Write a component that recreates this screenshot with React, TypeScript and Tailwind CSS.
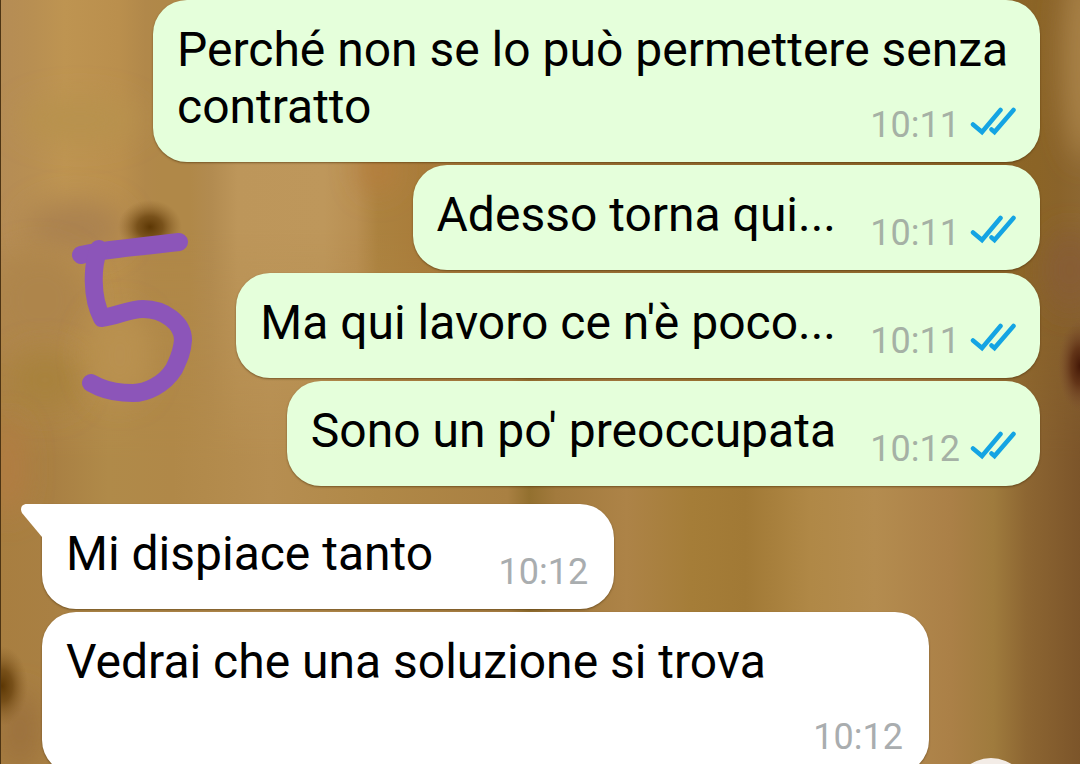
import React from "react";

interface Message {
  id: number;
  text: string;
  time: string;
  sent: boolean;
  tail?: boolean;
}

const MESSAGES: Message[] = [
  { id: 1, text: "Perché non se lo può permettere senza contratto", time: "10:11", sent: true },
  { id: 2, text: "Adesso torna qui...", time: "10:11", sent: true },
  { id: 3, text: "Ma qui lavoro ce n'è poco...", time: "10:11", sent: true },
  { id: 4, text: "Sono un po' preoccupata", time: "10:12", sent: true },
  { id: 5, text: "Mi dispiace tanto", time: "10:12", sent: false, tail: true },
  { id: 6, text: "Vedrai che una soluzione si trova", time: "10:12", sent: false },
];

// wood grain, left to right: [offset, color]
const GRAIN_TOP = [
  [0, "#b58c55"], [0.03, "#b88f52"], [0.06, "#be9451"], [0.11, "#ba8f4d"], [0.135, "#b1884a"],
  [0.15, "#b08848"], [0.175, "#b08848"], [0.195, "#b28b50"], [0.22, "#bd965a"], [0.3, "#be975b"],
  [0.33, "#b98f52"], [0.35, "#ac823f"], [0.39, "#a97c3a"], [0.6, "#9a7032"], [0.96, "#8b6426"],
  [0.98, "#8a632a"], [1, "#8d6731"],
] as const;

const GRAIN_BOTTOM = [
  [0, "#a87e40"], [0.05, "#a98043"], [0.1, "#b08a49"], [0.16, "#b08848"], [0.25, "#b68e51"],
  [0.35, "#b08847"], [0.47, "#a98042"], [0.49, "#93702f"], [0.515, "#a27a3d"], [0.58, "#ad8347"],
  [0.64, "#a57d38"], [0.69, "#a17935"], [0.75, "#b08846"], [0.81, "#b48c4f"], [0.88, "#ab8047"],
  [0.92, "#9f7b3d"], [0.95, "#8d6632"], [1, "#7c552a"],
] as const;

// soft colour patches over the grain
const PATCHES = [
  { cx: 75, cy: 228, rx: 50, ry: 28, fill: "#ab8250" },
  { cx: 40, cy: 300, rx: 50, ry: 50, fill: "#ae854b" },
  { cx: 45, cy: 380, rx: 35, ry: 30, fill: "#a8823e" },
  { cx: 120, cy: 355, rx: 32, ry: 45, fill: "#b99150" },
  { cx: 80, cy: 120, rx: 60, ry: 22, fill: "#b8924d" },
  { cx: 378, cy: 170, rx: 18, ry: 22, fill: "#b67e3c" },
  { cx: 8, cy: 468, rx: 16, ry: 48, fill: "#b27d43" },
  { cx: 1085, cy: 60, rx: 22, ry: 100, fill: "#a98246" },
  { cx: 1070, cy: 270, rx: 25, ry: 40, fill: "#875d35" },
  { cx: 20, cy: 730, rx: 20, ry: 40, fill: "#9b713d" },
];

function Wallpaper() {
  return (
    <svg
      className="absolute inset-0 h-full w-full"
      viewBox="0 0 1080 764"
      preserveAspectRatio="none"
      aria-hidden="true"
    >
      <defs>
        <linearGradient id="grainTop">
          {GRAIN_TOP.map(([offset, color]) => (
            <stop key={offset} offset={offset} stopColor={color} />
          ))}
        </linearGradient>
        <linearGradient id="grainBottom">
          {GRAIN_BOTTOM.map(([offset, color]) => (
            <stop key={offset} offset={offset} stopColor={color} />
          ))}
        </linearGradient>
        <linearGradient id="fade" x1="0" y1="0" x2="0" y2="1">
          <stop offset="0.3" stopColor="#000" />
          <stop offset="0.6" stopColor="#fff" />
        </linearGradient>
        <mask id="lower">
          <rect width="1080" height="764" fill="url(#fade)" />
        </mask>
        <filter id="soft" x="-100%" y="-100%" width="300%" height="300%">
          <feGaussianBlur stdDeviation="14" />
        </filter>
        <radialGradient id="knot">
          <stop offset="0" stopColor="#5c3704" />
          <stop offset="0.4" stopColor="#6b440f" stopOpacity="0.8" />
          <stop offset="1" stopColor="#8a612a" stopOpacity="0" />
        </radialGradient>
        <radialGradient id="redKnot">
          <stop offset="0" stopColor="#431706" />
          <stop offset="0.4" stopColor="#5a2a12" stopOpacity="0.8" />
          <stop offset="1" stopColor="#7d4f35" stopOpacity="0" />
        </radialGradient>
      </defs>
      <rect width="1080" height="764" fill="url(#grainTop)" />
      <rect width="1080" height="764" fill="url(#grainBottom)" mask="url(#lower)" />
      {PATCHES.map((patch, i) => (
        <ellipse key={i} {...patch} filter="url(#soft)" />
      ))}
      <ellipse cx="150" cy="227" rx="32" ry="27" fill="url(#knot)" />
      <ellipse cx="2" cy="686" rx="26" ry="40" fill="url(#knot)" />
      <ellipse cx="1080" cy="366" rx="22" ry="46" fill="url(#redKnot)" />
      <rect width="1" height="764" fill="#4d3413" />
    </svg>
  );
}

function ReadTicks() {
  return (
    <svg
      className="h-9 w-12"
      viewBox="0 0 48 36"
      fill="none"
      stroke="#14a4e3"
      strokeWidth="4.500"
      strokeLinecap="round"
      aria-label="Letto"
    >
      <path d="M3 17.500 12 25 30.500 3" />
      <path d="M21.500 22.500 24.500 25 43.500 3" />
    </svg>
  );
}

function Tail() {
  return (
    <svg className="absolute top-0 right-full h-9 w-[21px]" viewBox="0 0 21 36" fill="#fff" aria-hidden="true">
      <path d="M22 0H6C0 0-1 5 1 9L21 33H22Z" />
    </svg>
  );
}

function Bubble({ message }: { message: Message }) {
  const { text, time, sent, tail } = message;
  return (
    <li
      className={`flow-root max-w-[887px] rounded-[34px] pt-[21px] pb-4 pl-6 text-[48px] leading-[57px] text-black shadow-[0_1px_2px_rgba(60,35,0,0.5)] ${
        sent ? "self-end bg-[#e5ffdb] pr-[22px]" : "self-start bg-white pr-[26px]"
      } ${tail ? "relative mt-[15px] rounded-tl-none" : ""}`}
    >
      {tail && <Tail />}
      {text}
      {/* sits on the last line when there is room, otherwise on a new one */}
      <span
        className={`float-right mt-[26px] flex items-center justify-end gap-[10px] text-[36px] leading-[42px] ${
          sent ? "w-[182px] text-[#a5b1a5]" : "w-[155px] text-[#a9adaf]"
        }`}
      >
        <time>{time}</time>
        {sent && <ReadTicks />}
      </span>
    </li>
  );
}

export default function App() {
  return (
    <main className="relative h-screen overflow-hidden font-['Roboto',sans-serif]">
      <Wallpaper />
      <ul className="relative flex flex-col gap-[3px] pr-10 pl-[42px]">
        {MESSAGES.map((message) => (
          <Bubble key={message.id} message={message} />
        ))}
      </ul>

      {/* Pen mark */}
      <svg
        className="absolute top-[230px] left-[70px] h-[176px] w-[126px]"
        viewBox="70 230 126 176"
        fill="none"
        stroke="#8c55b9"
        strokeWidth="18"
        strokeLinecap="round"
        strokeLinejoin="round"
        role="img"
        aria-label="5"
      >
        <path d="M81 255C100 250 120 249 179 242" />
        <path d="M99 249C92 265 91 297 102 318C119 315 130 309 143 309C164 309 183 323 183 340C182 354 178 360 174 369C164 385 146 393 133 393C118 393 106 390 99 387Q95 385 91 383" />
      </svg>

      <button
        aria-label="Vai in fondo"
        className="absolute -bottom-[70px] left-[953px] size-[76px] rounded-full bg-[#f3ece6]"
      />
    </main>
  );
}
